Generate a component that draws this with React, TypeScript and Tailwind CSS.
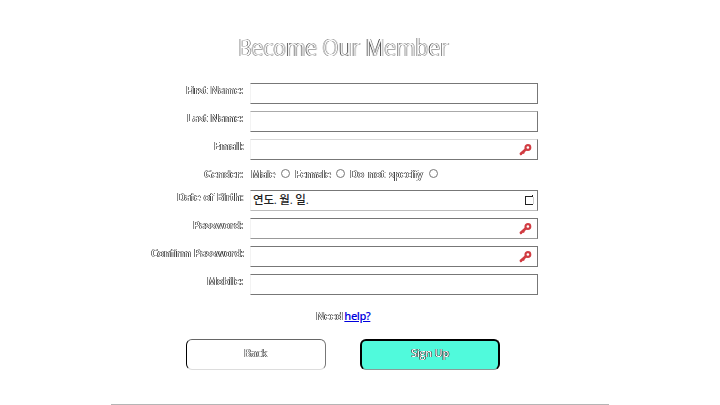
import type { ReactNode } from "react";

const outline = "inline-block text-white [text-shadow:-0.6px_0_0_#000,0.5px_0_0_#000,0_0.4px_0_#333] will-change-transform";

function KeyIcon() {
  return (
    <svg width="13" height="12" viewBox="0 0 13 12" fill="none" stroke="#d13c42">
      <circle cx="8.9" cy="3.5" r="2.4" strokeWidth="2.1" />
      <path d="M7 5.2 1.3 10.3" strokeWidth="2.6" />
      <path d="M3.6 7.8 5.3 9.4M1.2 9.4 2.4 10.9" strokeWidth="1.8" />
    </svg>
  );
}

function CalendarIcon() {
  return (
    <svg className="-mr-[2px]" width="9" height="11" viewBox="0 0 9 11" fill="none" stroke="#222" shapeRendering="crispEdges">
      <path d="M0.5 1V10M0 9.5H8M1 1.5H8M7.5 0V2" />
      <path d="M8.5 2V9" stroke="#ccc" />
    </svg>
  );
}

function Row({ label, children }: { label: string; children: ReactNode }) {
  return (
    <div className="flex h-[21px] items-start">
      <div className="w-[243px] shrink-0 text-right text-[11px] leading-[13px] font-semibold tracking-[-0.5px] whitespace-nowrap [word-spacing:1px]">
        <span className={outline}>{label}</span>
      </div>
      <div className="ml-2 flex">{children}</div>
    </div>
  );
}

function Field({ icon, children, top = "border-t-[#777]", bottom = "border-b-[#777]" }: { icon?: ReactNode; children?: ReactNode; top?: string; bottom?: string }) {
  return (
    <div className={`-ml-px flex h-[21px] w-[288px] items-center justify-between border border-l-[#f3f3f3] border-r-[#777] bg-white pr-[5px] pl-[2px] ${top} ${bottom}`}>
      <span className="-mt-px text-[11.5px] leading-[16px] font-medium tracking-[-0.2px] text-[#222]">{children}</span>
      {icon}
    </div>
  );
}

function Option({ label }: { label: string }) {
  return (
    <span className="flex h-[13px] items-center">
      <span className={`text-[11px] leading-[13px] font-semibold tracking-[-0.5px] whitespace-nowrap [word-spacing:2px] ${outline}`}>{label}</span>
      <span className="mr-[5px] ml-[6px] h-[9px] w-[9px] rounded-full border border-[#777]" />
    </span>
  );
}

export default function App() {
  return (
    <main className="flex h-[405px] w-[720px] flex-col overflow-hidden bg-white font-['Open_Sans','Noto_Sans_CJK_KR',sans-serif]">
      <h1 className="mt-[31px] ml-[238px] h-[32px] w-max origin-left scale-x-[0.91] text-[23px] leading-[32px] whitespace-nowrap text-white will-change-transform [text-shadow:-0.6px_0_0_#000,0.5px_0_0_#333,0_-0.3px_0_#777]">Become Our Member</h1>
      <div className="mt-[20px] flex flex-col gap-[7px]">
        <Row label="First Name:"><Field /></Row>
        <Row label="Last Name:"><Field top="border-t-[#aaa]" /></Row>
        <Row label="Email:"><Field top="border-t-[#d8d8d8]" icon={<KeyIcon />} /></Row>
      </div>
      <div className="mt-[7px] h-[23px]">
        <Row label="Gender:"><Option label="Male" /><Option label="Female" /><Option label="Do not specify" /></Row>
      </div>
      <div className="flex flex-col gap-[7px]">
        <Row label="Date of Birth:"><Field bottom="border-b-[#bbb]" icon={<CalendarIcon />}>연도. 월. 일.</Field></Row>
        <Row label="Password:"><Field icon={<KeyIcon />} bottom="border-b-[#999]" /></Row>
        <Row label="Confirm Password:"><Field icon={<KeyIcon />} /></Row>
        <Row label="Mobile:"><Field /></Row>
      </div>
      <p className="mt-[13px] ml-[316px] flex h-4 gap-[2px] text-[11px] leading-4 font-semibold tracking-[-0.45px] whitespace-nowrap">
        <span className={outline}>Need</span>
        <a className="text-[#0000dd] underline">help?</a>
      </p>
      <div className="mt-[15px] ml-[186px] flex gap-[34px]">
        <button className="h-[31px] w-[140px] rounded-[6px] border border-t-[#666] border-r-[#777] border-b-[#ddd] border-l-black bg-white pb-[2px] text-[11px] tracking-[-0.3px]"><span className={outline}>Back</span></button>
        <button className="h-[31px] w-[140px] rounded-[6px] border-2 border-b border-black border-b-[#8a9a97] bg-[#50fadc] pb-[3px] text-[11px] font-semibold tracking-[-0.3px]"><span className={outline}>Sign Up</span></button>
      </div>
      <hr className="mt-auto ml-[111px] h-px w-[498px] border-0 bg-[#b5b5b5]" />
    </main>
  );
}
